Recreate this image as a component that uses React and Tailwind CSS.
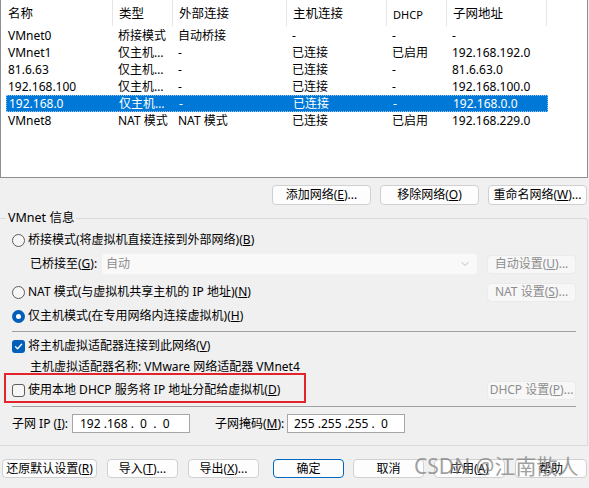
import { ChevronDown } from "lucide-react";

const rows = [
  ["VMnet0", "桥接模式", "自动桥接", "-", "-", "-"],
  ["VMnet1", "仅主机…", "-", "已连接", "已启用", "192.168.192.0"],
  ["81.6.63", "仅主机…", "-", "已连接", "-", "81.6.63.0"],
  ["192.168.100", "仅主机…", "-", "已连接", "-", "192.168.100.0"],
  ["192.168.0", "仅主机…", "-", "已连接", "-", "192.168.0.0"],
  ["VMnet8", "NAT 模式", "NAT 模式", "已连接", "已启用", "192.168.229.0"],
];

const headers = ["名称", "类型", "外部连接", "主机连接", "DHCP", "子网地址"];
const headerWidths = ["w-[112px]", "w-[60px]", "w-[114px]", "w-[100px]", "w-[60px]", "w-[100px]"];
const cellWidths = ["w-[106px] pl-[2px]", "w-[60px] pl-[6px]", "w-[114px] pl-[6px]", "w-[100px] pl-[6px]", "w-[60px] pl-[6px]", "w-[100px] pl-[6px]"];

function Btn({ children, className = "", disabled = false, primary = false }) {
  return (
    <div
      className={`flex items-center justify-center rounded-[4px] border text-[12px] leading-none ${
        disabled
          ? "border-[#ebebeb] bg-[#f7f7f7] text-[#8d8d8d]"
          : primary
          ? "border-[#0067c0] bg-[#fdfdfd] text-black"
          : "border-[#d0d0d0] bg-[#fdfdfd] text-black"
      } ${className}`}
    >
      {children}
    </div>
  );
}

function Radio({ checked }) {
  return checked ? (
    <div className="flex h-[13px] w-[13px] items-center justify-center rounded-full bg-[#005fb8]">
      <div className="h-[5px] w-[5px] rounded-full bg-white" />
    </div>
  ) : (
    <div className="h-[13px] w-[13px] rounded-full border border-[#5d5d5d] bg-[#f6f6f6]" />
  );
}

function Check({ checked }) {
  return checked ? (
    <div className="flex h-[13px] w-[13px] items-center justify-center rounded-[3px] bg-[#005fb8]">
      <svg width="9" height="9" viewBox="0 0 9 9" fill="none">
        <path d="M1.5 4.8 L3.6 6.8 L7.6 2.2" stroke="white" strokeWidth="1.3" strokeLinecap="round" strokeLinejoin="round" />
      </svg>
    </div>
  ) : (
    <div className="h-[13px] w-[13px] rounded-[3px] border border-[#5d5d5d] bg-[#f6f6f6]" />
  );
}

export default function App() {
  return (
    <div className="relative h-[488px] w-[589px] overflow-hidden bg-[#f0f0f0] font-['Noto_Sans','Noto_Sans_CJK_SC',sans-serif] text-[12px] text-black">
      {/* network list */}
      <div className="h-[178px] w-[588px] border-b border-l border-r border-[#8e8f94] bg-white">
        <div className="flex h-[27px]">
          {headers.map((h, i) => (
            <div
              key={h}
              className={`${headerWidths[i]} flex h-[26px] items-center border-r border-[#e5e5e5] pt-[2px] ${i === 0 ? "pl-[7px]" : "pl-[6px]"} ${
                h === "DHCP" ? "text-[11px]" : "text-[12.5px]"
              } leading-none`}
            >
              {h}
            </div>
          ))}
        </div>
        {rows.map((r, idx) => {
          const sel = idx === 4;
          return (
            <div
              key={idx}
              className={`ml-[5px] flex h-[17px] w-[542px] items-center leading-none ${
                sel ? "border border-dotted border-[#9cc4ea] bg-[#0078d7] text-white" : ""
              }`}
            >
              {r.map((c, j) => (
                <div key={j} className={`${cellWidths[j]} whitespace-nowrap`}>
                  {c}
                </div>
              ))}
            </div>
          );
        })}
      </div>

      {/* network buttons */}
      <div className="mt-[7px] flex h-[20px] justify-end gap-[9px] pr-[2px]">
        <Btn className="w-[99px]">
          添加网络(<u>E</u>)...
        </Btn>
        <Btn className="w-[99px]">
          移除网络(<u>O</u>)
        </Btn>
        <Btn className="w-[99px]">
          重命名网络(<u>W</u>)...
        </Btn>
      </div>

      {/* VMnet info group */}
      <div className="relative mt-[13px] flex h-[228px] w-[588px] flex-col rounded-tr-[3px] border-b border-r border-t border-[#dadada] pl-[12px] pr-[11px]">
        <div className="absolute left-[6px] top-[-9px] bg-[#f0f0f0] px-[2px] text-[12.5px] leading-[16px]">VMnet 信息</div>

        <div className="mt-[11px] flex h-[20px] items-center gap-[3px]">
          <Radio />
          <span>桥接模式(将虚拟机直接连接到外部网络)(<u>B</u>)</span>
        </div>

        <div className="mt-[4px] flex h-[20px] items-center">
          <span className="w-[90px] shrink-0 whitespace-nowrap pl-[18px]">
            已桥接至(<u>G</u>):
          </span>
          <div className="flex h-[20px] w-[375px] items-center justify-between rounded-[3px] bg-[#f9f9f9] pl-[4px] pr-[6px] text-[#8d8d8d]">
            <span>自动</span>
            <ChevronDown size={12} strokeWidth={1.3} color="#9a9a9a" />
          </div>
          <Btn disabled className="ml-auto h-[19px] w-[89px]">
            自动设置(<u>U</u>)...
          </Btn>
        </div>

        <div className="mt-[8px] flex h-[20px] items-center">
          <Radio />
          <span className="ml-[3px]">
            NAT 模式(与虚拟机共享主机的 IP 地址)(<u>N</u>)
          </span>
          <Btn disabled className="ml-auto h-[19px] w-[89px]">
            NAT 设置(<u>S</u>)...
          </Btn>
        </div>

        <div className="mt-[4px] flex h-[20px] items-center gap-[3px]">
          <Radio checked />
          <span>仅主机模式(在专用网络内连接虚拟机)(<u>H</u>)</span>
        </div>

        <div className="mt-[5px] h-px bg-[#a0a0a0]" />

        <div className="mt-[4px] flex h-[20px] items-center gap-[3px]">
          <Check checked />
          <span>将主机虚拟适配器连接到此网络(<u>V</u>)</span>
        </div>

        <div className="mt-[3px] flex h-[16px] items-center pl-[18px]">
          主机虚拟适配器名称: VMware 网络适配器 VMnet4
        </div>

        <div className="mt-[5px] flex h-[20px] items-center">
          <Check />
          <span className="ml-[3px]">
            使用本地 DHCP 服务将 IP 地址分配给虚拟机(<u>D</u>)
          </span>
          <Btn disabled className="ml-auto h-[19px] w-[89px]">
            DHCP 设置(<u>P</u>)...
          </Btn>
        </div>

        <div className="mt-[6px] h-px bg-[#a0a0a0]" />

        <div className="mt-[7px] flex h-[19px] items-center">
          <span className="w-[60px] whitespace-nowrap">
            子网 IP (<u>I</u>):
          </span>
          <div className="flex h-[19px] w-[118px] items-center border border-[#a6a6a6] bg-white pl-[7px] whitespace-pre">
            {"192 .168 .  0  .  0"}
          </div>
          <span className="ml-[25px] w-[72px] whitespace-nowrap">
            子网掩码(<u>M</u>):
          </span>
          <div className="flex h-[19px] w-[118px] items-center border border-[#a6a6a6] bg-white pl-[6px] whitespace-pre">
            {"255 .255 .255 .  0"}
          </div>
        </div>
      </div>

      {/* dialog buttons */}
      <div className="mt-[13px] flex h-[19px] pl-[2px]">
        <Btn className="w-[95px]">
          还原默认设置(<u>R</u>)
        </Btn>
        <Btn className="ml-[10px] w-[71px]">
          导入(<u>T</u>)...
        </Btn>
        <Btn className="ml-[10px] w-[71px]">
          导出(<u>X</u>)...
        </Btn>
        <Btn primary className="ml-[14px] w-[71px]">
          确定
        </Btn>
        <Btn className="ml-[9px] w-[71px]">取消</Btn>
        <Btn className="ml-[10px] w-[71px]">
          应用(<u>A</u>)
        </Btn>
        <Btn className="ml-[10px] w-[72px]">帮助</Btn>
      </div>

      {/* annotation box */}
      <div className="absolute left-[4px] top-[373px] h-[30px] w-[302px] border-2 border-[#e3242b]" />

      {/* watermark */}
      <div className="absolute left-[414px] top-[452px] whitespace-nowrap text-[21px] leading-[28px] text-[#7a7a7a] opacity-70">
        CSDN @江南散人
      </div>
    </div>
  );
}
